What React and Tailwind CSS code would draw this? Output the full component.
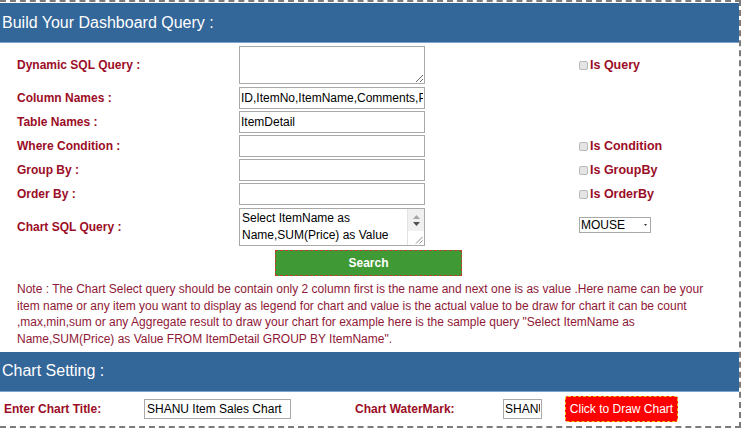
import { useState } from 'react'

const labelCls = "font-bold text-[12px] text-[#9b0d26]"
const inputCls = "h-[22px] w-[186px] border border-[#a9a9a9] bg-white px-[1px] text-[12px] text-black outline-none"

const Check = ({ label, checked, onChange }) => (
  <label className={`flex items-center gap-[2px] ${labelCls}`}>
    <input
      type="checkbox"
      checked={checked}
      onChange={onChange}
      className="appearance-none w-[9px] h-[9px] border border-[#b8b8b8] bg-[#e4e4e4] rounded-[2px]"
    />
    <span className="text-[12.5px]">{label}</span>
  </label>
)

const Row = ({ label, children, right, className = '' }) => (
  <div className={`grid grid-cols-[222px_340px_1fr] items-center pl-[17px] ${className}`}>
    <span className={labelCls}>{label}</span>
    <div className="flex">{children}</div>
    <div>{right}</div>
  </div>
)

// textarea with an old-style scrollbar drawn beside it
const ScrollArea = ({ value, onChange }) => (
  <div className="h-[38px] w-[186px] border border-[#a9a9a9] flex bg-white">
    <textarea
      className="flex-1 resize-none overflow-hidden text-[12px] leading-[17px] px-[2px] pt-[1px] outline-none"
      value={value}
      onChange={onChange}
    />
    <div className="w-[17px] flex flex-col border-l border-[#e3e3e3]">
      <div className="h-[22px] bg-[#f0f0f0] flex flex-col items-center justify-center gap-[3px]">
        <svg width="7" height="4" viewBox="0 0 7 4"><path d="M3.5 0L7 4H0z" fill="#a6a6a6" /></svg>
        <svg width="7" height="4" viewBox="0 0 7 4"><path d="M0 0h7L3.5 4z" fill="#505050" /></svg>
      </div>
      <div className="flex-1 flex items-end justify-end p-[1px]">
        <svg width="8" height="8" viewBox="0 0 8 8">
          <path d="M7.5 1L1 7.5M7.5 4.5L4.5 7.5" stroke="#8a8a8a" strokeWidth="1" />
        </svg>
      </div>
    </div>
  </div>
)

const App = () => {
  const [checks, setChecks] = useState({ query: false, cond: false, group: false, order: false })
  const [columns, setColumns] = useState('ID,ItemNo,ItemName,Comments,Price')
  const [table, setTable] = useState('ItemDetail')
  const [chartQuery, setChartQuery] = useState('Select ItemName as Name,SUM(Price) as Value FROM ItemDetail GROUP BY ItemName')
  const [title, setTitle] = useState('SHANU Item Sales Chart')
  const [watermark, setWatermark] = useState('SHANU')

  const toggle = key => setChecks(prev => ({ ...prev, [key]: !prev[key] }))

  return (
    <div className="font-['Liberation_Sans',Arial,sans-serif] bg-white w-[744px] h-[434px] overflow-hidden">
      <div className="w-[741px] border-t-2 border-r-2 border-b-2 border-dashed border-[#7b7b7b]">
        <div className="mt-px h-[40px] bg-[#336699] border-b border-[#7ba3cc] flex items-center pl-[2px] text-[16px] text-white">
          Build Your Dashboard Query :
        </div>

        <Row label="Dynamic SQL Query :" className="mt-[3px]" right={<Check label="Is Query" checked={checks.query} onChange={() => toggle('query')} />}>
          <textarea className="h-[38px] w-[186px] border border-[#a9a9a9] text-[12px] p-[2px] outline-none" />
        </Row>
        <Row label="Column Names :" className="mt-[3px]">
          <input className={inputCls} value={columns} onChange={e => setColumns(e.target.value)} />
        </Row>
        <Row label="Table Names :" className="mt-[2px]">
          <input className={inputCls} value={table} onChange={e => setTable(e.target.value)} />
        </Row>
        <Row label="Where Condition :" className="mt-[2px]" right={<Check label="Is Condition" checked={checks.cond} onChange={() => toggle('cond')} />}>
          <input className={inputCls} />
        </Row>
        <Row label="Group By :" className="mt-[2px]" right={<Check label="Is GroupBy" checked={checks.group} onChange={() => toggle('group')} />}>
          <input className={inputCls} />
        </Row>
        <Row label="Order By :" className="mt-[2px]" right={<Check label="Is OrderBy" checked={checks.order} onChange={() => toggle('order')} />}>
          <input className={inputCls} />
        </Row>
        <Row
          label="Chart SQL Query :"
          className="mt-[3px]"
          right={
            <div className="relative w-[72px] h-[16px] -mt-[4px]">
              <select className="block appearance-none w-[72px] h-[16px] border border-[#a9a9a9] bg-white text-[12px] leading-[14px] pl-[1px] text-black outline-none">
                <option>MOUSE</option>
                <option>KEYBOARD</option>
              </select>
              <svg className="absolute right-[4px] top-[7px]" width="3" height="2" viewBox="0 0 3 2">
                <path d="M0 0h3L1.5 2z" fill="#333" />
              </svg>
            </div>
          }
        >
          <ScrollArea value={chartQuery} onChange={e => setChartQuery(e.target.value)} />
        </Row>

        <div className="pl-[275px] mt-[4px]">
          <button className="w-[187px] h-[26px] bg-[#3f9a35] border border-dashed border-[#c0392b] text-white font-bold text-[12px]">
            Search
          </button>
        </div>

        <p className="mt-[5px] pl-[17px] w-[725px] text-[12px] leading-[16.7px] text-[#8f1836]">
          Note : The Chart Select query should be contain only 2 column first is the name and next one is as value .Here name can be your item name or any item you want to display as legend for chart and value is the actual value to be draw for chart it can be count ,max,min,sum or any Aggregate result to draw your chart for example here is the sample query "Select ItemName as Name,SUM(Price) as Value FROM ItemDetail GROUP BY ItemName".
        </p>

        <div className="mt-[4px] h-[40px] bg-[#336699] border-b border-[#7ba3cc] flex items-center pl-[2px] text-[16px] text-white">
          Chart Setting :
        </div>

        <div className="grid grid-cols-[140px_211px_148px_62px_auto] items-center pl-[4px] h-[34px]">
          <span className={labelCls}>Enter Chart Title:</span>
          <input
            className="h-[20px] w-[147px] border border-[#a9a9a9] px-[2px] text-[12px] outline-none"
            value={title}
            onChange={e => setTitle(e.target.value)}
          />
          <span className={labelCls}>Chart WaterMark:</span>
          <input
            className="h-[20px] w-[39px] border border-[#a9a9a9] px-[1px] text-[12px] outline-none"
            value={watermark}
            onChange={e => setWatermark(e.target.value)}
          />
          <button className="w-[113px] h-[26px] bg-[#ff0000] border border-dashed border-[#f0c419] rounded-[3px] text-white text-[12px]">
            Click to Draw Chart
          </button>
        </div>
      </div>
    </div>
  )
}

export default App
